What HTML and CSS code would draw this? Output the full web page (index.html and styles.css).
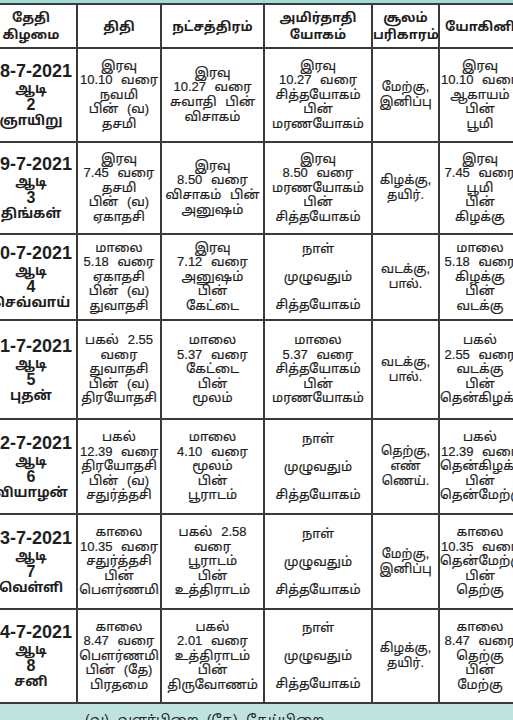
FILE: index.html
```html
<!DOCTYPE html>
<html lang="ta">
<head>
<meta charset="utf-8">
<title>ஆடி பஞ்சாங்கம்</title>
<link rel="stylesheet" href="styles.css">
</head>
<body>
<div class="page">
  <div class="strip"></div>
  <table class="cal">
    <thead>
      <tr class="head">
        <th class="c-date">தேதி<br>கிழமை</th>
        <th class="c-thithi">திதி</th>
        <th class="c-star">நட்சத்திரம்</th>
        <th class="c-amir">அமிர்தாதி<br>யோகம்</th>
        <th class="c-sool">சூலம்<br>பரிகாரம்</th>
        <th class="c-yog">யோகினி</th>
      </tr>
    </thead>
    <tbody>
      <tr class="r1">
        <td class="date"><span class="d">18-7-2021</span><span class="m">ஆடி</span><span class="n">2</span><span class="w">ஞாயிறு</span></td>
        <td>இரவு<br>10.10 வரை<br>நவமி<br>பின் (வ)<br>தசமி</td>
        <td>இரவு<br>10.27 வரை<br>சுவாதி பின்<br>விசாகம்</td>
        <td>இரவு<br>10.27 வரை<br>சித்தயோகம்<br>பின்<br>மரணயோகம்</td>
        <td class="sool">மேற்கு,<br>இனிப்பு</td>
        <td class="yog">இரவு<br>10.10 வரை<br>ஆகாயம்<br>பின்<br>பூமி</td>
      </tr>
      <tr class="r2">
        <td class="date"><span class="d">19-7-2021</span><span class="m">ஆடி</span><span class="n">3</span><span class="w">திங்கள்</span></td>
        <td>இரவு<br>7.45 வரை<br>தசமி<br>பின் (வ)<br>ஏகாதசி</td>
        <td>இரவு<br>8.50 வரை<br>விசாகம் பின்<br>அனுஷம்</td>
        <td>இரவு<br>8.50 வரை<br>மரணயோகம்<br>பின்<br>சித்தயோகம்</td>
        <td class="sool">கிழக்கு,<br>தயிர்.</td>
        <td class="yog">இரவு<br>7.45 வரை<br>பூமி<br>பின்<br>கிழக்கு</td>
      </tr>
      <tr class="r3">
        <td class="date"><span class="d">20-7-2021</span><span class="m">ஆடி</span><span class="n">4</span><span class="w">செவ்வாய்</span></td>
        <td>மாலை<br>5.18 வரை<br>ஏகாதசி<br>பின் (வ)<br>துவாதசி</td>
        <td>இரவு<br>7.12 வரை<br>அனுஷம்<br>பின்<br>கேட்டை</td>
        <td class="wide">நாள்<br>முழுவதும்<br>சித்தயோகம்</td>
        <td class="sool">வடக்கு,<br>பால்.</td>
        <td class="yog">மாலை<br>5.18 வரை<br>கிழக்கு<br>பின்<br>வடக்கு</td>
      </tr>
      <tr class="r4">
        <td class="date"><span class="d">21-7-2021</span><span class="m">ஆடி</span><span class="n">5</span><span class="w">புதன்</span></td>
        <td>பகல் 2.55<br>வரை<br>துவாதசி<br>பின் (வ)<br>திரயோதசி</td>
        <td>மாலை<br>5.37 வரை<br>கேட்டை<br>பின்<br>மூலம்</td>
        <td>மாலை<br>5.37 வரை<br>சித்தயோகம்<br>பின்<br>மரணயோகம்</td>
        <td class="sool">வடக்கு,<br>பால்.</td>
        <td class="yog">பகல்<br>2.55 வரை<br>வடக்கு<br>பின்<br>தென்கிழக்கு</td>
      </tr>
      <tr class="r5">
        <td class="date"><span class="d">22-7-2021</span><span class="m">ஆடி</span><span class="n">6</span><span class="w">வியாழன்</span></td>
        <td>பகல்<br>12.39 வரை<br>திரயோதசி<br>பின் (வ)<br>சதுர்த்தசி</td>
        <td>மாலை<br>4.10 வரை<br>மூலம்<br>பின்<br>பூராடம்</td>
        <td class="wide">நாள்<br>முழுவதும்<br>சித்தயோகம்</td>
        <td class="sool">தெற்கு,<br>எண்<br>ணெய்.</td>
        <td class="yog">பகல்<br>12.39 வரை<br>தென்கிழக்கு<br>பின்<br>தென்மேற்கு</td>
      </tr>
      <tr class="r6">
        <td class="date"><span class="d">23-7-2021</span><span class="m">ஆடி</span><span class="n">7</span><span class="w">வெள்ளி</span></td>
        <td>காலை<br>10.35 வரை<br>சதுர்த்தசி<br>பின்<br>பௌர்ணமி</td>
        <td>பகல் 2.58<br>வரை<br>பூராடம்<br>பின்<br>உத்திராடம்</td>
        <td class="wide">நாள்<br>முழுவதும்<br>சித்தயோகம்</td>
        <td class="sool">மேற்கு,<br>இனிப்பு</td>
        <td class="yog">காலை<br>10.35 வரை<br>தென்மேற்கு<br>பின்<br>தெற்கு</td>
      </tr>
      <tr class="r7">
        <td class="date"><span class="d">24-7-2021</span><span class="m">ஆடி</span><span class="n">8</span><span class="w">சனி</span></td>
        <td>காலை<br>8.47 வரை<br>பௌர்ணமி<br>பின் (தே)<br>பிரதமை</td>
        <td>பகல்<br>2.01 வரை<br>உத்திராடம்<br>பின்<br>திருவோணம்</td>
        <td class="wide">நாள்<br>முழுவதும்<br>சித்தயோகம்</td>
        <td class="sool">கிழக்கு,<br>தயிர்.</td>
        <td class="yog">காலை<br>8.47 வரை<br>தெற்கு<br>பின்<br>மேற்கு</td>
      </tr>
    </tbody>
  </table>
  <div class="note">(வ)- வளர்பிறை &nbsp;(தே)- தேய்பிறை</div>
</div>
</body>
</html>
```
FILE: styles.css
```css
html, body {
  margin: 0;
  padding: 0;
  background: #ffffff;
}

.page {
  width: 513px;
  height: 720px;
  overflow: hidden;
  background: #ffffff;
  font-family: "Liberation Sans", "Noto Sans Tamil", "Lohit Tamil", "Noto Sans", sans-serif;
  color: #1e1e1e;
}

.strip {
  height: 3px;
  background: #a6dad4;
}

.cal {
  margin-left: -16px;
  width: 538px;
  table-layout: fixed;
  border-collapse: separate;
  border-spacing: 0;
  border-top: 2px solid #3a3a3a;
  border-left: 2px solid #3a3a3a;
}

.cal th,
.cal td {
  box-sizing: border-box;
  padding: 0;
  border-right: 2px solid #3a3a3a;
  border-bottom: 2px solid #3a3a3a;
  text-align: center;
  vertical-align: middle;
  font-size: 13px;
  line-height: 14.6px;
  word-spacing: 5px;
  white-space: nowrap;
  overflow: hidden;
  -webkit-text-stroke: 0.2px #1e1e1e;
}

.cal th {
  font-weight: bold;
  font-size: 13px;
  line-height: 17px;
  word-spacing: 0;
  -webkit-text-stroke: 0;
}

.c-date { width: 92px; }
.c-thithi { width: 84px; }
.c-star { width: 103px; }
.c-amir { width: 108px; }
.c-sool { width: 67px; }
.c-yog { width: 82px; }

.head { height: 44px; }
.r1 { height: 94px; }
.r2 { height: 92px; }
.r3 { height: 85px; }
.r4 { height: 99px; }
.r5 { height: 95px; }
.r6 { height: 95px; }
.r7 { height: 94px; }

.cal td.date {
  font-weight: bold;
  word-spacing: 0;
  -webkit-text-stroke: 0;
}

.date span {
  display: block;
}

.date .d {
  font-size: 18px;
  line-height: 20px;
}

.date .m {
  font-size: 13.5px;
  line-height: 16px;
}

.date .n {
  font-size: 16px;
  line-height: 15px;
}

.date .w {
  font-size: 13.5px;
  line-height: 17px;
}

.cal td.sool {
  font-size: 12.5px;
  line-height: 15px;
  word-spacing: 0;
}

.cal td.wide {
  line-height: 28px;
}

.note {
  height: 13px;
  background: #bfe3df;
  padding: 8px 0 0 85px;
  font-size: 14px;
  line-height: 16px;
  color: #262626;
  white-space: nowrap;
}
```
